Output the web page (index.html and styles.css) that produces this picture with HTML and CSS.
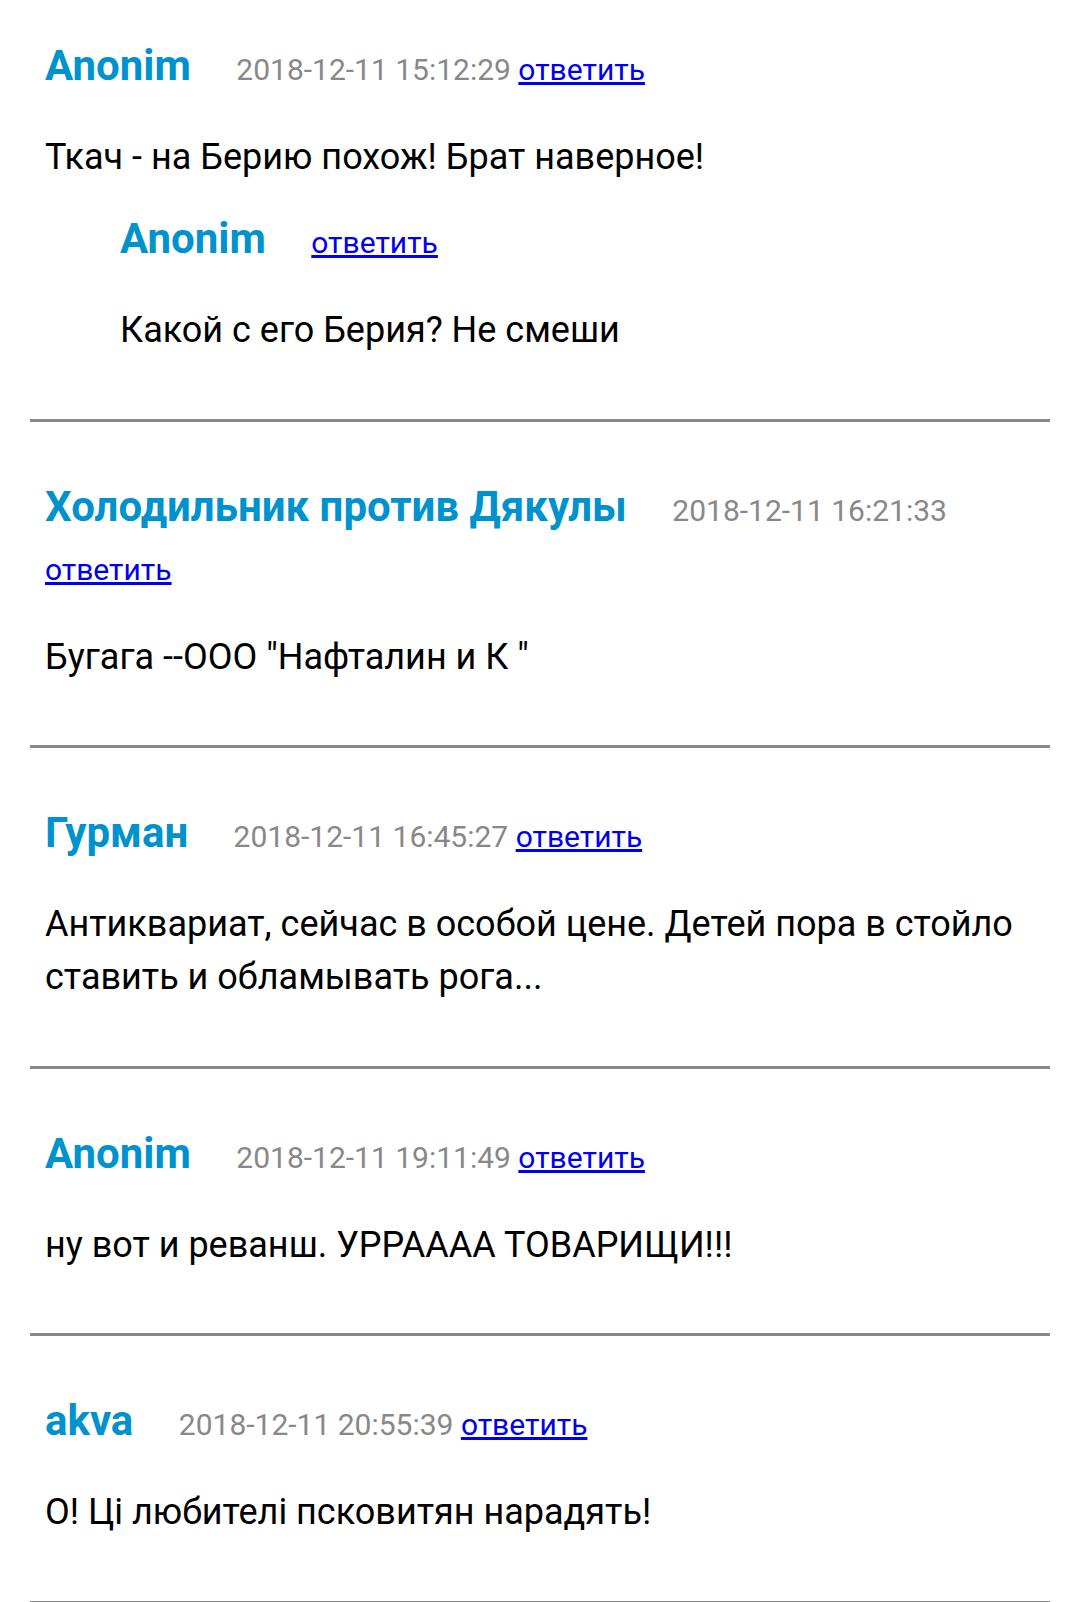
FILE: index.html
```html
<!DOCTYPE html>
<html lang="ru">
<head>
<meta charset="utf-8">
<title>Комментарии</title>
<link rel="stylesheet" href="styles.css">
</head>
<body>
<div class="comments">
  <div class="comment">
    <div class="head"><span class="name">Anonim</span> <span class="date">2018-12-11 15:12:29</span> <a href="#" class="reply-link">ответить</a></div>
    <p class="text">Ткач - на Берию похож! Брат наверное!</p>
    <div class="reply">
      <div class="head"><span class="name">Anonim</span> <a href="#" class="reply-link">ответить</a></div>
      <p class="text">Какой с его Берия? Не смеши</p>
    </div>
  </div>
  <div class="comment">
    <div class="head"><span class="name">Холодильник против Дякулы</span> <span class="date">2018-12-11 16:21:33</span> <a href="#" class="reply-link">ответить</a></div>
    <p class="text">Бугага --ООО "Нафталин и К "</p>
  </div>
  <div class="comment">
    <div class="head"><span class="name">Гурман</span> <span class="date">2018-12-11 16:45:27</span> <a href="#" class="reply-link">ответить</a></div>
    <p class="text">Антиквариат, сейчас в особой цене. Детей пора в стойло ставить и обламывать рога...</p>
  </div>
  <div class="comment">
    <div class="head"><span class="name">Anonim</span> <span class="date">2018-12-11 19:11:49</span> <a href="#" class="reply-link">ответить</a></div>
    <p class="text">ну вот и реванш. УРРАААА ТОВАРИЩИ!!!</p>
  </div>
  <div class="comment">
    <div class="head"><span class="name">akva</span> <span class="date">2018-12-11 20:55:39</span> <a href="#" class="reply-link">ответить</a></div>
    <p class="text">О! Ці любителі псковитян нарадять!</p>
  </div>
</div>
</body>
</html>
```
FILE: styles.css
```css
html, body {
  margin: 0;
  padding: 0;
  background: #fff;
}
body {
  font-family: Roboto, "Noto Sans", sans-serif;
  color: #000;
}
.comments {
  margin: 0 28px 0 30px;
}
.comment {
  padding: 55px 15px 61.5px;
  border-bottom: 3px solid #888;
}
.comment:first-child {
  padding-top: 36px;
}
.head {
  font-size: 30px;
  line-height: 59px;
}
.name {
  font-size: 42px;
  font-weight: bold;
  color: #0092cd;
  margin-right: 38px;
}
.date {
  color: #888;
}
.reply-link {
  color: #0000ee;
  text-decoration: underline;
}
.text {
  margin: 32px 0 0;
  font-size: 36px;
  line-height: 53px;
}
.reply {
  margin-top: 25px;
  padding-left: 75px;
}
```
